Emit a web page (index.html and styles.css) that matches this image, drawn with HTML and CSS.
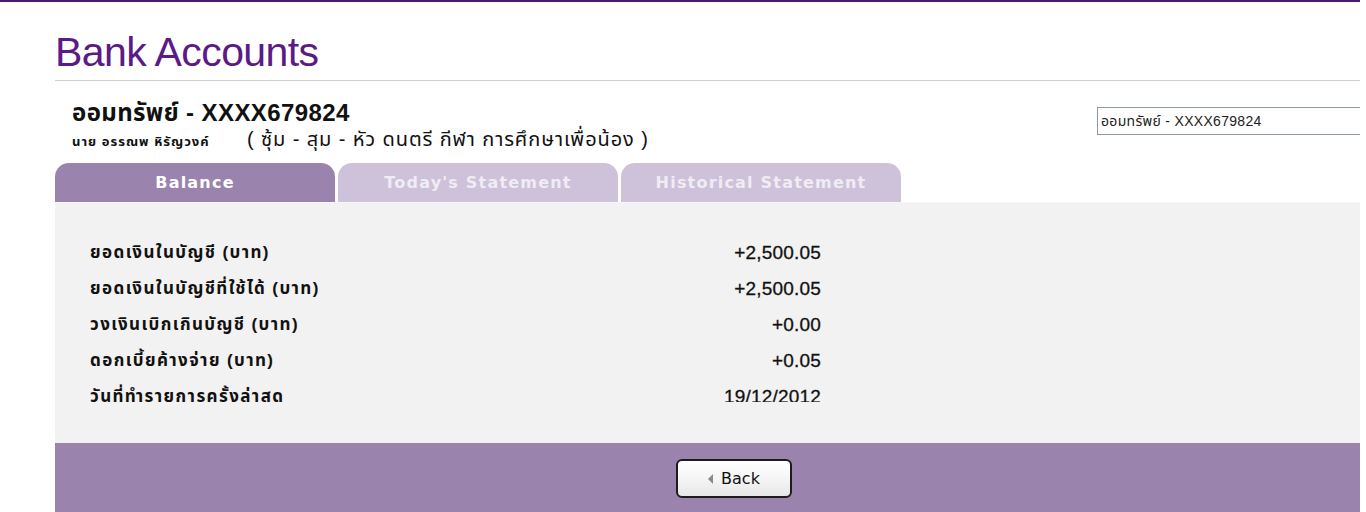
FILE: index.html
```html
<!DOCTYPE html>
<html lang="th">
<head>
<meta charset="utf-8">
<title>Bank Accounts</title>
<link rel="stylesheet" href="styles.css">
</head>
<body>
<div class="page">
  <div class="topline"></div>
  <div class="title-bar">
    <h1 class="title">Bank Accounts</h1>
  </div>
  <div class="account-row">
    <div class="account-info">
      <div class="account-name">ออมทรัพย์ - XXXX679824</div>
      <div class="account-sub">
        <span class="owner">นาย อรรณพ หิรัญวงค์</span>
        <span class="nickname">( ซุ้ม - สุม - หัว ดนตรี กีฬา การศึกษาเพื่อน้อง )</span>
      </div>
    </div>
    <div class="account-select">ออมทรัพย์ - XXXX679824</div>
  </div>
  <div class="tabs">
    <div class="tab active">Balance</div>
    <div class="tab">Today's Statement</div>
    <div class="tab">Historical Statement</div>
  </div>
  <div class="panel">
    <div class="scroll">
      <div class="row"><span class="label">ยอดเงินในบัญชี (บาท)</span><span class="value">+2,500.05</span></div>
      <div class="row"><span class="label">ยอดเงินในบัญชีที่ใช้ได้ (บาท)</span><span class="value">+2,500.05</span></div>
      <div class="row"><span class="label">วงเงินเบิกเกินบัญชี (บาท)</span><span class="value">+0.00</span></div>
      <div class="row"><span class="label">ดอกเบี้ยค้างจ่าย (บาท)</span><span class="value">+0.05</span></div>
      <div class="row"><span class="label">วันที่ทำรายการครั้งล่าสุด</span><span class="value">19/12/2012</span></div>
    </div>
  </div>
  <div class="footer">
    <button class="back"><span class="arrow"></span>Back</button>
  </div>
</div>
</body>
</html>
```
FILE: styles.css
```css
html, body {
  margin: 0;
  padding: 0;
  background: #ffffff;
}
body {
  font-family: "Liberation Sans", "Noto Sans Thai", "Noto Sans", sans-serif;
  overflow: hidden;
}
.page {
  width: 1360px;
  height: 512px;
  overflow: hidden;
}
.topline {
  height: 2px;
  background: #4b1a6c;
}
.title-bar {
  margin-left: 55px;
  height: 79px;
  border-bottom: 1px solid #d0d0d0;
  box-sizing: border-box;
}
.title {
  margin: 0;
  padding-top: 27px;
  font-family: "Liberation Sans", Arial, sans-serif;
  font-weight: normal;
  font-size: 41px;
  line-height: 46px;
  letter-spacing: -0.6px;
  color: #5b1a86;
}
.account-row {
  margin-left: 55px;
  height: 82px;
  display: flex;
  justify-content: space-between;
  align-items: flex-start;
}
.account-info {
  padding-left: 17px;
  padding-top: 19px;
}
.account-name {
  font-size: 24px;
  font-weight: bold;
  line-height: 26px;
  color: #111;
  letter-spacing: 0.4px;
}
.account-sub {
  display: flex;
  align-items: baseline;
  margin-top: 0;
  line-height: 26px;
  color: #111;
}
.owner {
  font-size: 13px;
  font-weight: bold;
  letter-spacing: 1px;
  width: 175px;
}
.nickname {
  font-size: 20px;
  letter-spacing: 0.9px;
}
.account-select {
  margin-top: 26px;
  width: 263px;
  height: 28px;
  box-sizing: border-box;
  border: 1px solid #8e9aa4;
  border-right: none;
  font-size: 14px;
  letter-spacing: 0.3px;
  line-height: 26px;
  padding-left: 3px;
  color: #222;
}
.tabs {
  margin-left: 55px;
  display: flex;
  gap: 3px;
  height: 39px;
}
.tab {
  width: 280px;
  height: 39px;
  border-radius: 14px 14px 0 0;
  background: #cdc2da;
  color: #f0ecf4;
  font-family: "DejaVu Sans", Verdana, sans-serif;
  font-weight: bold;
  font-size: 16px;
  letter-spacing: 1.2px;
  line-height: 40px;
  text-align: center;
}
.tab.active {
  background: #9a84ae;
  color: #ffffff;
}
.panel {
  margin-left: 55px;
  height: 241px;
  background: #f2f2f2;
  border-top: 1px solid #f7f5fa;
  box-sizing: border-box;
  padding-top: 19px;
}
.scroll {
  height: 180px;
  overflow: hidden;
  padding-top: 13px;
  box-sizing: border-box;
}
.row {
  display: grid;
  grid-template-columns: 400px 331px;
  padding-left: 35px;
  height: 36px;
  align-items: center;
  color: #111;
}
.label {
  font-size: 17px;
  font-weight: bold;
  letter-spacing: 1.4px;
}
.value {
  text-align: right;
  font-family: "Liberation Sans", Arial, sans-serif;
  font-size: 19px;
  letter-spacing: 0.2px;
  -webkit-text-stroke: 0.3px #111;
}
.footer {
  margin-left: 55px;
  height: 69px;
  background: #9a84ae;
  padding: 16px 0 0 621px;
  box-sizing: border-box;
}
.back {
  width: 116px;
  height: 39px;
  border: 2px solid #1c1c1c;
  border-radius: 6px;
  background: linear-gradient(#ffffff, #f4f4f4 55%, #e6e6e6);
  font-family: "DejaVu Sans", Verdana, sans-serif;
  font-size: 16px;
  color: #111;
  display: flex;
  align-items: center;
  justify-content: center;
  gap: 8px;
  padding: 0;
}
.arrow {
  width: 0;
  height: 0;
  border-top: 5px solid transparent;
  border-bottom: 5px solid transparent;
  border-right: 5px solid #8a8a8a;
}
```
